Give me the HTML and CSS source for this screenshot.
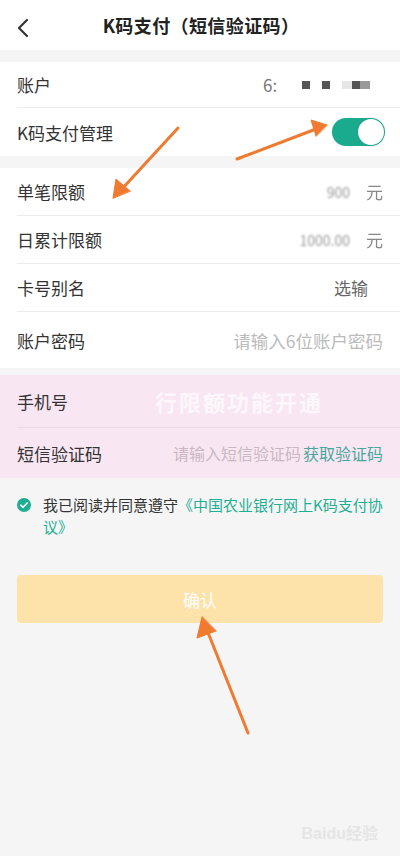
FILE: index.html
```html
<!DOCTYPE html>
<html lang="zh">
<head>
<meta charset="utf-8">
<link rel="stylesheet" href="styles.css">
</head>
<body>
<div class="page">
  <header class="header">
    <svg class="back" width="14" height="20" viewBox="0 0 14 20"><path d="M11 2 L3 10 L11 18" fill="none" stroke="#333" stroke-width="2.2" stroke-linecap="round" stroke-linejoin="round"/></svg>
    <h1 class="title">K码支付（短信验证码）</h1>
  </header>

  <section class="group g1">
    <div class="row r46"><span class="label">账户</span><span class="acct"><span class="acct-num">6:</span><i class="sq"></i><i class="sq"></i><i class="sq light"></i><i class="sq"></i><i class="sq mid"></i></span></div>
    <div class="row r48"><span class="label">K码支付管理</span><span class="toggle"><span class="knob"></span></span></div>
  </section>

  <section class="group g2">
    <div class="row r48"><span class="label">单笔限额</span><span class="val"><span class="blur">900</span><span class="unit">元</span></span></div>
    <div class="row r48"><span class="label">日累计限额</span><span class="val"><span class="blur">1000.00</span><span class="unit">元</span></span></div>
    <div class="row r48"><span class="label">卡号别名</span><span class="val opt">选输</span></div>
    <div class="row r56"><span class="label">账户密码</span><span class="val ph">请输入6位账户密码</span></div>
  </section>

  <section class="group pink">
    <div class="row r53"><span class="label">手机号</span><span class="wm">行限额功能开通</span></div>
    <div class="row r50"><span class="label">短信验证码</span><span class="val sms"><span class="ph2">请输入短信验证码</span><span class="get">获取验证码</span></span></div>
  </section>

  <div class="agree">
    <svg class="check" width="14" height="14" viewBox="0 0 14 14"><circle cx="7" cy="7" r="7" fill="#1fae94"/><path d="M3.8 7.2 L6.1 9.3 L10.2 5" fill="none" stroke="#fff" stroke-width="1.6" stroke-linecap="round" stroke-linejoin="round"/></svg>
    <p class="agree-text">我已阅读并同意遵守<span class="link">《中国农业银行网上K码支付协议》</span></p>
  </div>

  <button class="confirm">确认</button>

  <div class="baidu">Bai<span class="du">du</span>经验</div>

  <svg class="arrows" width="400" height="856" viewBox="0 0 400 856">
    <g stroke="#f07a30" stroke-width="3" stroke-linecap="round" fill="#f07a30">
      <line x1="178" y1="128" x2="121" y2="190"/>
      <polygon points="113,198 116,179 130,191" stroke-width="1"/>
      <line x1="237" y1="159" x2="316" y2="129"/>
      <polygon points="327,125 311,120 316,136" stroke-width="1"/>
      <line x1="248" y1="733" x2="207" y2="630"/>
      <polygon points="202,617 197,638 216,631" stroke-width="1"/>
    </g>
  </svg>
</div>
</body>
</html>
```

FILE: styles.css
```css
* { box-sizing: border-box; }
html, body { margin: 0; padding: 0; }
body {
  background: #f5f5f5;
  font-family: "Noto Sans CJK SC", "Noto Sans", sans-serif;
  color: #333;
}
.page {
  position: relative;
  width: 400px;
  height: 856px;
  overflow: hidden;
  background: #f5f5f5;
}
.header {
  height: 50px;
  background: #fff;
  display: flex;
  align-items: center;
  justify-content: center;
  position: relative;
}
.back {
  position: absolute;
  left: 16px;
  top: 18px;
}
.title {
  margin: 0;
  font-size: 18px;
  font-weight: 700;
  color: #222;
  padding-left: 2px;
  letter-spacing: 0.4px;
}
.group {
  background: #fff;
  padding-left: 17px;
}
.g1 { margin-top: 12px; }
.g2 { margin-top: 12px; }
.pink {
  margin-top: 7px;
  background: #f9e6f3;
}
.row {
  display: flex;
  align-items: center;
  justify-content: space-between;
  padding-right: 17px;
  border-bottom: 1px solid #ececec;
}
.row:last-child { border-bottom: none; }
.pink .row { border-bottom-color: #efd6e6; }
.pink .row:last-child { border-bottom: none; }
.r46 { height: 46px; }
.r48 { height: 48px; }
.r50 { height: 50px; }
.r53 { height: 53px; }
.r56 { height: 56px; }
.label {
  font-size: 17px;
  color: #333;
}
.acct {
  display: flex;
  align-items: center;
  margin-right: 13px;
}
.acct-num {
  font-size: 17px;
  color: #777;
  margin-right: 23px;
  width: 16px;
  overflow: hidden;
}
.sq {
  display: inline-block;
  width: 8px;
  height: 8px;
  background: #555;
  margin-right: 12px;
}
.sq.light { background: #e6e6e6; margin-right: 0; width: 10px; }
.sq.mid { background: #999; margin-right: 0; margin-left: -12px; width: 10px; }
.toggle {
  width: 53px;
  height: 28px;
  border-radius: 14px;
  background: #1aab8e;
  display: flex;
  align-items: center;
  justify-content: flex-end;
  padding-right: 1px;
  margin-right: -2px;
}
.knob {
  width: 26px;
  height: 26px;
  border-radius: 50%;
  background: #fff;
  box-shadow: 0 0 2px rgba(0,0,0,0.15);
}
.val {
  font-size: 16px;
  color: #666;
  display: flex;
  align-items: center;
}
.blur {
  color: #999;
  filter: blur(1.2px);
  font-size: 14px;
  margin-right: 16px;
}
.unit { color: #888; font-size: 17px; filter: blur(0.6px); }
.opt { color: #666; font-size: 17px; margin-right: 15px; }
.ph { color: #bbb; font-size: 17.5px; }
.wm {
  font-size: 22px;
  font-weight: 700;
  color: rgba(255,255,255,0.7);
  margin-right: 60px;
  letter-spacing: 2px;
}
.sms { font-size: 16px; }
.ph2 { color: #c9b8c3; margin-right: 2px; }
.get { color: #4aa79a; font-size: 16px; }
.agree {
  display: flex;
  align-items: flex-start;
  padding: 16px 17px 0 17px;
  gap: 12px;
}
.check { margin-top: 4px; flex: none; }
.agree-text {
  margin: 0;
  font-size: 15px;
  line-height: 22px;
  color: #333;
  word-break: break-all;
}
.link { color: #1fae94; }
.confirm {
  display: block;
  margin: 37px 17px 0 17px;
  width: 366px;
  height: 48px;
  border: none;
  border-radius: 4px;
  background: #fde2aa;
  color: #fff;
  font-family: "Noto Sans CJK SC", sans-serif;
  font-size: 17px;
}
.baidu {
  position: absolute;
  right: 22px;
  bottom: 12px;
  font-family: "Liberation Sans", "Noto Sans CJK SC", sans-serif;
  font-size: 16px;
  font-weight: 700;
  color: rgba(225,225,225,0.8);
}
.arrows {
  position: absolute;
  left: 0;
  top: 0;
  pointer-events: none;
}
```
